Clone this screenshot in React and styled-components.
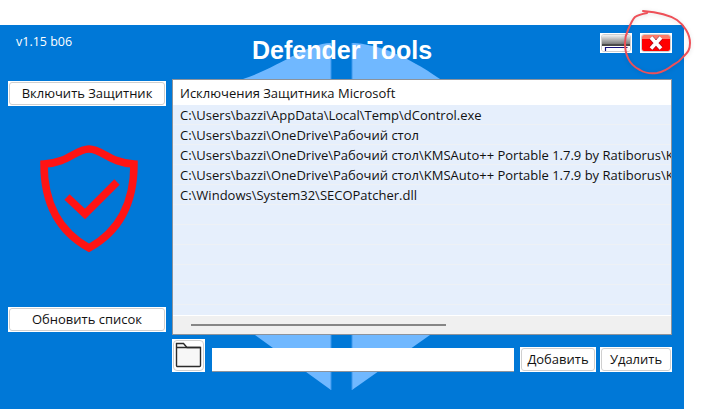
import React from 'react';
import styled, { createGlobalStyle } from 'styled-components';

const blue = '#0078d7';
const uiFont = '"Open Sans", "Noto Sans", Arial, sans-serif';

const paths = [
  'C:\\Users\\bazzi\\AppData\\Local\\Temp\\dControl.exe',
  'C:\\Users\\bazzi\\OneDrive\\Рабочий стол',
  'C:\\Users\\bazzi\\OneDrive\\Рабочий стол\\KMSAuto++ Portable 1.7.9 by Ratiborus\\K',
  'C:\\Users\\bazzi\\OneDrive\\Рабочий стол\\KMSAuto++ Portable 1.7.9 by Ratiborus\\K',
  'C:\\Windows\\System32\\SECOPatcher.dll',
  '',
  '',
  '',
  '',
  '',
  '',
];

const GlobalStyle = createGlobalStyle`
  html, body {
    margin: 0;
    background: #fff;
  }
  * {
    box-sizing: border-box;
  }
`;

const Page = styled.div`
  width: 701px;
  height: 409px;
  padding: 25px 17px 0 0;
  overflow: hidden;
  position: relative;
  font-family: ${uiFont};
`;

const Window = styled.div`
  position: relative;
  height: 384px;
  background: ${blue};
  padding: 0 12px 0 8px;
  display: flex;
  flex-direction: column;
`;

const Backdrop = styled.svg`
  position: absolute;
  left: 0;
  top: 0;
`;

const Header = styled.header`
  position: relative;
  height: 54px;
  display: flex;
  justify-content: space-between;
  padding-top: 8px;
`;

const Version = styled.span`
  color: #fff;
  font-size: 12.5px;
  line-height: 17px;
  margin: 0 0 0 8px;
`;

const Title = styled.h1`
  position: absolute;
  left: 244px;
  top: 10px;
  margin: 0;
  color: #fff;
  font: bold 25px/30px 'Liberation Sans', Arial, sans-serif;
`;

const WindowButtons = styled.div`
  display: flex;
  gap: 8px;
`;

const WindowButton = styled.button`
  width: 32px;
  height: 20px;
  padding: 1px;
  border: 0;
  background: #fff;
  display: block;
`;

const Face = styled.span`
  display: flex;
  align-items: center;
  justify-content: center;
  width: 100%;
  height: 100%;
  border: 1px solid #cfcfcf;
  border-radius: ${({ $radius }) => $radius || 3}px;
  overflow: hidden;
  color: #111;
`;

const Main = styled.main`
  position: relative;
  display: flex;
  gap: 6px;
  height: 256px;
`;

const Sidebar = styled.aside`
  width: 158px;
  padding: 2px 0 3px;
  display: flex;
  flex-direction: column;
  justify-content: space-between;
  align-items: center;
`;

const TextButton = styled.button`
  width: ${({ $width }) => $width}px;
  height: 25px;
  padding: 1px;
  border: 0;
  background: #fff;
  font-family: inherit;
  font-size: 13px;
  display: block;

  ${Face} {
    padding-bottom: 2px;
  }
`;

const ShieldIcon = styled.svg`
  display: block;
  margin: 0 0 16px 3px;
`;

const Panel = styled.section`
  flex: 1;
  min-width: 0;
  border: 1.5px solid #8d939b;
  background: #f0f0f0;
  display: flex;
  flex-direction: column;
`;

const PanelTitle = styled.div`
  height: 24.5px;
  flex: none;
  background: #fff;
  padding: 0 7px;
  font-size: 13px;
  line-height: 27px;
  color: #111;
`;

const List = styled.div`
  height: 211px;
  flex: none;
  overflow: hidden;
  background: #e6effc;
  border-bottom: 1px solid #fff;
`;

const Row = styled.div`
  height: 20px;
  padding: 0 7px;
  font-size: 13px;
  line-height: 21px;
  color: #111;
  white-space: nowrap;
  overflow: hidden;
  border-bottom: 1px solid #eef1f5;
`;

const Scrollbar = styled.div`
  flex: 1;
  padding: 8px 0 0 18px;
`;

const Thumb = styled.div`
  width: 255px;
  height: 2px;
  background: #868686;
`;

const Footer = styled.footer`
  position: relative;
  display: flex;
  align-items: flex-end;
  margin: 4px 0 0 164px;
  height: 33px;
`;

const FolderButton = styled.button`
  width: 33px;
  height: 33px;
  padding: 1px;
  border: 0;
  background: #fff;
  display: block;
  margin-right: 7px;
`;

const PathInput = styled.input`
  width: 302px;
  height: 24.5px;
  margin-right: 6px;
  border: 0;
  border-bottom: 1px solid #8d939b;
  background: #fff;
  outline: none;
`;

const Spacer = styled.span`
  width: 4px;
`;

const Ink = styled.svg`
  position: absolute;
  left: 0;
  top: 0;
  pointer-events: none;
  filter: drop-shadow(0 1px 2px rgba(0, 0, 0, 0.12));
`;

const MinimizeIcon = () => (
  <svg width="28" height="16" viewBox="0 0 28 16">
    <defs>
      <linearGradient id="minGrad" x1="0" y1="0" x2="0" y2="1">
        <stop offset="0" stopColor="#f2f2f2" />
        <stop offset="1" stopColor="#7d7d7d" />
      </linearGradient>
    </defs>
    <rect width="28" height="9" fill="url(#minGrad)" />
    <rect y="9" width="28" height="2" fill="#4a4a4a" />
    <rect y="11" width="28" height="5" fill="#fff" />
    <path d="M3.5 16v-3.5h22" fill="none" stroke="#14107a" strokeWidth="1.2" />
  </svg>
);

const CloseIcon = () => (
  <svg width="28" height="16" viewBox="0 0 28 16">
    <rect width="28" height="4" fill="#ff7a66" />
    <rect y="4" width="28" height="12" fill="#ff0000" />
    <path d="M9 2.5l10 11M19 2.5l-10 11" stroke="#1b1b5a" strokeWidth="5" opacity="0.35" />
    <path d="M9 2.5l10 11M19 2.5l-10 11" stroke="#fff" strokeWidth="3.6" />
  </svg>
);

const FolderIcon = () => (
  <svg width="27" height="27" viewBox="0 0 27 27" fill="none" stroke="#2b2b2b" strokeWidth="1.4">
    <path d="M1.5 1.5h7l3.5 4h13.5v18a1 1 0 0 1-1 1h-22a1 1 0 0 1-1-1z" fill="#f7f7f7" />
    <path d="M1.5 5.5h24" />
  </svg>
);

export default function App() {
  return (
    <>
      <GlobalStyle />
      <Page>
        <Window>
          <Backdrop width="684" height="384" viewBox="0 0 684 384">
            <g fill="#70b8ff">
              <path d="M243 54C280 42 305 19 331 18V365L255 310z" />
              <path d="M352 18C378 19 405 30 440 54L430 310L352 365z" />
            </g>
            <path d="M331 18V365M352 18V365" stroke="#3d97ec" strokeWidth="1" />
          </Backdrop>
          <Header>
            <Version>v1.15 b06</Version>
            <Title>Defender Tools</Title>
            <WindowButtons>
              <WindowButton aria-label="Свернуть">
                <Face><MinimizeIcon /></Face>
              </WindowButton>
              <WindowButton aria-label="Закрыть">
                <Face><CloseIcon /></Face>
              </WindowButton>
            </WindowButtons>
          </Header>
          <Main>
            <Sidebar>
              <TextButton $width={158}><Face>Включить Защитник</Face></TextButton>
              <ShieldIcon width="98" height="108" viewBox="0 0 98 108" fill="none" stroke="#ff1414" strokeWidth="7.5">
                <path d="M49 4C36 4 28 18 4 19C4 60 20 87 49 103C78 87 94 60 94 19C70 18 62 4 49 4Z" />
                <path d="M27 52L45 69L77 37" />
              </ShieldIcon>
              <TextButton $width={158}><Face>Обновить список</Face></TextButton>
            </Sidebar>
            <Panel>
              <PanelTitle>Исключения Защитника Microsoft</PanelTitle>
              <List>
                {paths.map((path, i) => (
                  <Row key={i}>{path}</Row>
                ))}
              </List>
              <Scrollbar><Thumb /></Scrollbar>
            </Panel>
          </Main>
          <Footer>
            <FolderButton aria-label="Обзор">
              <Face $radius={4}><FolderIcon /></Face>
            </FolderButton>
            <PathInput />
            <TextButton $width={76}><Face>Добавить</Face></TextButton>
            <Spacer />
            <TextButton $width={72}><Face>Удалить</Face></TextButton>
          </Footer>
        </Window>
        <Ink width="701" height="409" viewBox="0 0 701 409" fill="none">
          <path
            d="M643 11C655 12 668 14 677 20C684 25 690 34 690 43C690 50 688 52 683 57C680 61 677 63 673 65C668 69 663 72 657 73C650 74 645 73 640 70C634 67 630 63 628 58C626 54 625 49 625 43C625 38 626 34 628 30C630 25 632 20 635 17C638 15 642 14 647 13"
            stroke="#ee5058"
            strokeWidth="2"
            strokeLinecap="round"
          />
        </Ink>
      </Page>
    </>
  );
}
